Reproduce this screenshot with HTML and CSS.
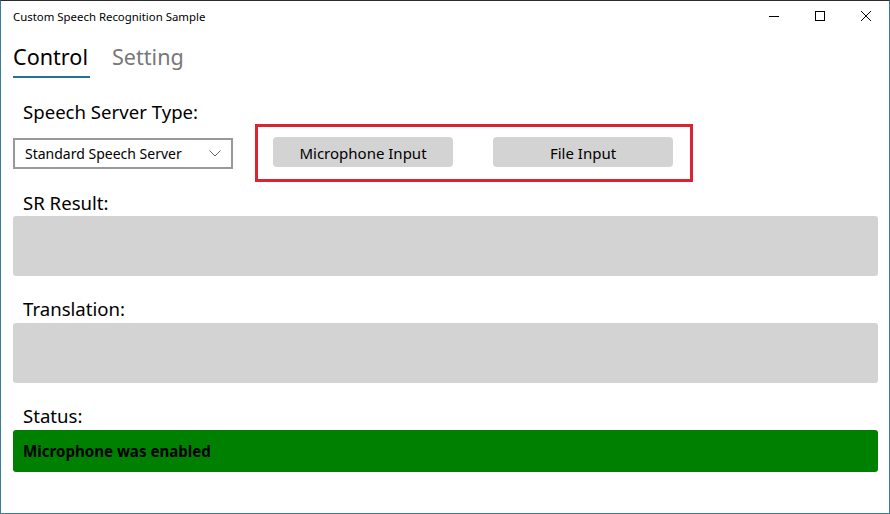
FILE: index.html
```html
<!DOCTYPE html>
<html>
<head>
<meta charset="utf-8">
<link rel="stylesheet" href="styles.css">
</head>
<body>
<div class="window">
  <div class="titlebar">
    <div class="title">Custom Speech Recognition Sample</div>
    <div class="caption">
      <div class="cbtn"><svg width="10" height="10" viewBox="0 0 10 10"><path d="M0 5.5h10" stroke="#000" stroke-width="1"/></svg></div>
      <div class="cbtn"><svg width="10" height="10" viewBox="0 0 10 10"><rect x="0.5" y="0.5" width="9" height="9" fill="none" stroke="#000" stroke-width="1"/></svg></div>
      <div class="cbtn"><svg width="10" height="10" viewBox="0 0 10 10"><path d="M0 0L10 10M10 0L0 10" stroke="#000" stroke-width="1"/></svg></div>
    </div>
  </div>
  <div class="content">
    <div class="tabs">
      <div class="tab active">Control</div>
      <div class="tab">Setting</div>
    </div>
    <div class="label first">Speech Server Type:</div>
    <div class="row">
      <div class="combo">
        <span>Standard Speech Server</span>
        <svg width="12" height="7" viewBox="0 0 12 7"><path d="M0.5 0.5L6 6L11.5 0.5" fill="none" stroke="#666" stroke-width="1"/></svg>
      </div>
      <div class="highlight">
        <div class="btn">Microphone Input</div>
        <div class="btn">File Input</div>
      </div>
    </div>
    <div class="label after-row">SR Result:</div>
    <div class="box"></div>
    <div class="label">Translation:</div>
    <div class="box"></div>
    <div class="label">Status:</div>
    <div class="status">Microphone was enabled</div>
  </div>
</div>
</body>
</html>
```
FILE: styles.css
```css
html, body {
  margin: 0;
  padding: 0;
  background: #fff;
}
body {
  font-family: "Noto Sans", "Open Sans", sans-serif;
  color: #000;
}
.window {
  width: 890px;
  height: 514px;
  box-sizing: border-box;
  border-top: 1px solid #2b2b2b;
  border-left: 1px solid #3b7d96;
  border-right: 1px solid #3b7d96;
  border-bottom: 1px solid #3b7d96;
  display: flex;
  flex-direction: column;
  overflow: hidden;
}
.titlebar {
  height: 30px;
  display: flex;
  align-items: center;
  justify-content: space-between;
  flex-shrink: 0;
}
.title {
  font-size: 11.4px;
  padding-left: 12px;
  padding-top: 1px;
}
.caption {
  display: flex;
  height: 30px;
}
.cbtn {
  width: 46px;
  height: 30px;
  display: flex;
  align-items: center;
  justify-content: center;
}
.content {
  padding: 0 11px 0 12px;
  display: flex;
  flex-direction: column;
}
.tabs {
  display: flex;
  gap: 22px;
  margin-top: 11px;
}
.tab {
  font-size: 21.6px;
  line-height: 30px;
  color: #777;
  padding-bottom: 4px;
  border-bottom: 2px solid transparent;
}
.tab.active {
  color: #000;
  border-bottom-color: #2a6f9a;
  padding-right: 2px;
}
.label {
  font-size: 18.6px;
  line-height: 24px;
  margin: 21px 0 2px 10px;
  color: #000;
}
.label.first {
  margin-top: 22px;
  margin-bottom: 0;
}
.label.after-row {
  margin-top: 9px;
  margin-bottom: 1px;
}
.row {
  display: flex;
  align-items: center;
  gap: 22px;
}
.combo {
  width: 220px;
  height: 31px;
  box-sizing: border-box;
  border: 2px solid #999;
  display: flex;
  align-items: center;
  justify-content: space-between;
  padding: 0 10px 0 10px;
  font-size: 14px;
}
.highlight {
  width: 438px;
  height: 58px;
  box-sizing: border-box;
  border: 3px solid #da2432;
  display: flex;
  align-items: flex-start;
  gap: 40px;
  padding: 10px 0 0 15px;
}
.btn {
  width: 180px;
  height: 30px;
  background: #d3d3d3;
  border-radius: 4px;
  display: flex;
  align-items: center;
  justify-content: center;
  font-size: 15px;
  padding-top: 2px;
  box-sizing: border-box;
}
.box {
  height: 60px;
  background: #d3d3d3;
  border-radius: 3px;
}
.status {
  height: 42px;
  background: #008000;
  border-radius: 3px;
  display: flex;
  align-items: center;
  padding-left: 10px;
  font-size: 15.1px;
  font-weight: bold;
  color: #000;
}
```
